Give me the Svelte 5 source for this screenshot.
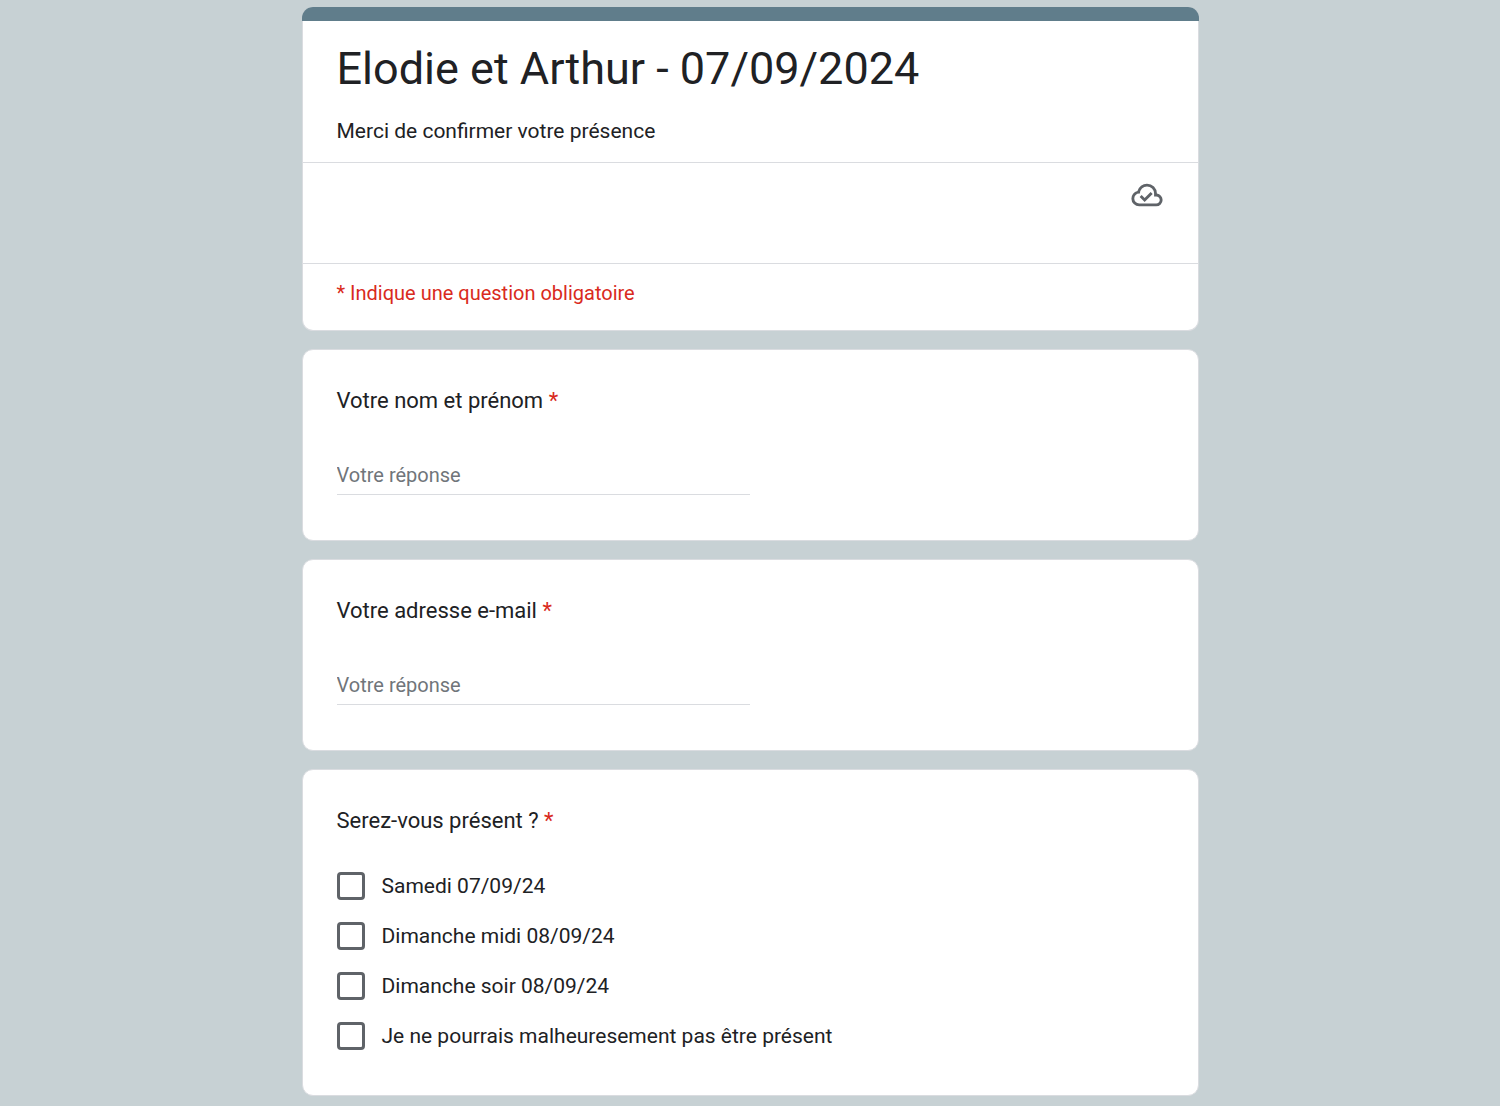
<script>
	let answers = $state({ name: '', email: '', attendance: [] });

	const textQuestions = [
		{ id: 'name', label: 'Votre nom et prénom', type: 'text' },
		{ id: 'email', label: 'Votre adresse e-mail', type: 'email' }
	];

	const attendanceOptions = [
		'Samedi 07/09/24',
		'Dimanche midi 08/09/24',
		'Dimanche soir 08/09/24',
		'Je ne pourrais malheuresement pas être présent'
	];
</script>

<main>
	<form>
		<header class="intro">
			<div class="title-block">
				<h1>Elodie et Arthur - 07/09/2024</h1>
				<p>Merci de confirmer votre présence</p>
			</div>
			<div class="save-status">
				<svg viewBox="0 -960 960 960" aria-hidden="true">
					<path d="m414-280 226-226-58-58-169 169-84-84-57 57 142 142ZM260-160q-91 0-155.5-63T40-377q0-78 47-139t123-78q25-92 100-149t170-57q117 0 198.5 81.5T760-520q69 8 114.5 59.5T920-340q0 75-52.5 127.5T740-160H260Zm0-80h480q42 0 71-29t29-71q0-42-29-71t-71-29h-60v-80q0-83-58.5-141.5T480-720q-83 0-141.5 58.5T280-520h-20q-58 0-99 41t-41 99q0 58 41 99t99 41Z" />
				</svg>
			</div>
			<p class="required-note">* Indique une question obligatoire</p>
		</header>

		{#each textQuestions as question}
			<section class="card">
				<label class="question" for={question.id}>
					{question.label} <span class="star">*</span>
				</label>
				<input
					class="answer"
					id={question.id}
					type={question.type}
					placeholder="Votre réponse"
					required
					bind:value={answers[question.id]}
				/>
			</section>
		{/each}

		<section class="card" role="group" aria-labelledby="attendance">
			<h2 class="question" id="attendance">Serez-vous présent ? <span class="star">*</span></h2>
			<div class="options">
				{#each attendanceOptions as option}
					<label class="option">
						<input type="checkbox" value={option} bind:group={answers.attendance} />
						<span>{option}</span>
					</label>
				{/each}
			</div>
		</section>
	</form>
</main>

<style>
	:global(body) {
		background-color: #c7d1d4;
	}

	main {
		padding: 7px 24px 10px;
		font-family: Roboto, 'Liberation Sans', sans-serif;
		color: #202124;
	}

	form {
		display: flex;
		flex-direction: column;
		gap: 18px;
		max-width: 897px;
		margin: 0 auto;
	}

	h1,
	h2,
	p {
		margin: 0;
		font-weight: 400;
	}

	.intro,
	.card {
		background-color: #fff;
		border: 1px solid #dadce0;
		border-radius: 11px;
	}

	.intro {
		border-top: 0;
	}

	.intro::before {
		content: '';
		display: block;
		height: 14px;
		margin: 0 -1px;
		border-radius: 11px 11px 0 0;
		background-color: #607d8b;
	}

	.title-block {
		padding: 20px 34px 16px;
	}

	h1 {
		font-size: 45px;
		line-height: 56px;
	}

	.title-block p {
		margin-top: 19px;
		font-size: 21px;
		line-height: 30px;
	}

	.save-status {
		display: flex;
		justify-content: flex-end;
		padding: 15px 34px 51px;
		border: solid #dadce0;
		border-width: 1px 0;
	}

	.save-status svg {
		width: 34px;
		height: 34px;
		fill: #5f6368;
	}

	.required-note {
		padding: 14px 34px 22px;
		font-size: 20px;
		line-height: 30px;
		color: #d92a20;
	}

	.card {
		padding: 36px 34px 45px;
	}

	.question {
		display: block;
		font-size: 22px;
		line-height: 30px;
	}

	.star {
		color: #d92a20;
	}

	.answer {
		display: block;
		box-sizing: border-box;
		width: 50%;
		height: 35px;
		margin-top: 44px;
		padding: 0 0 4px;
		border: 0;
		border-bottom: 1px solid #dadce0;
		background: none;
		font-family: inherit;
		font-size: 20px;
		line-height: 30px;
		color: inherit;
	}

	.answer::placeholder {
		color: #70757a;
		opacity: 1;
	}

	.answer:focus {
		outline: none;
		border-bottom-color: #607d8b;
	}

	.options {
		display: flex;
		flex-direction: column;
		align-items: flex-start;
		gap: 22px;
		margin-top: 36px;
	}

	.option {
		display: flex;
		align-items: center;
		gap: 17px;
		font-size: 21px;
		line-height: 28px;
	}

	.option input {
		appearance: none;
		flex: none;
		width: 28px;
		height: 28px;
		margin: 0;
		border: 3px solid #5f6368;
		border-radius: 4px;
	}

	.option input:checked {
		background-color: #607d8b;
		border-color: #607d8b;
	}
</style>
